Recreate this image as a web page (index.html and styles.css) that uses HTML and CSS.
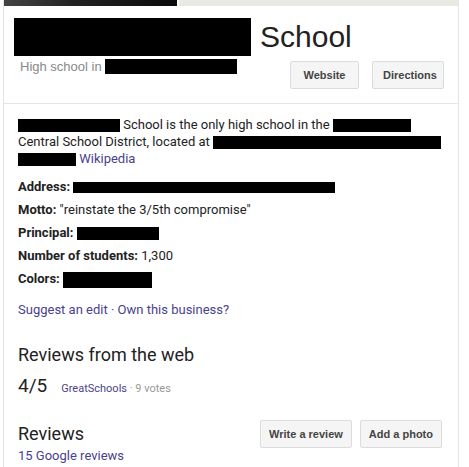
FILE: index.html
```html
<!DOCTYPE html>
<html lang="en">
<head>
  <meta charset="UTF-8" />
  <title>School</title>
  <link rel="stylesheet" href="styles.css">
</head>
<body>
  <div class="card">
    <div class="photos">
      <div class="photo"></div>
      <div class="map"></div>
    </div>

    <div class="header">
      <div class="title">
        <span class="redact title-redact"></span>
        <span class="title-text">School</span>
      </div>
      <div class="sub-row">
        <div class="subtitle">High school in <span class="redact sub-redact"></span></div>
        <div class="buttons">
          <a class="btn btn-website">Website</a>
          <a class="btn btn-directions">Directions</a>
        </div>
      </div>
    </div>

    <div class="body">
      <p class="desc">
        <span class="redact r-name"></span> School is the only high school in the <span class="redact r-district"></span>
        Central School District, located at <span class="redact r-addr"></span>
        <span class="redact r-city"></span> <a class="link">Wikipedia</a>
      </p>

      <div class="fact"><b>Address:</b> <span class="redact r-address"></span></div>
      <div class="fact"><b>Motto:</b> "reinstate the 3/5th compromise"</div>
      <div class="fact"><b>Principal:</b> <span class="redact r-principal"></span></div>
      <div class="fact"><b>Number of students:</b> 1,300</div>
      <div class="fact"><b>Colors:</b> <span class="redact r-colors"></span></div>

      <div class="edit"><a class="link">Suggest an edit</a> · <a class="link">Own this business?</a></div>

      <h2 class="section-title">Reviews from the web</h2>
      <div class="web-review">
        <span class="score">4/5</span>
        <a class="link small">GreatSchools</a><span class="votes"> · 9 votes</span>
      </div>

      <div class="reviews-row">
        <div>
          <h2 class="section-title reviews-title">Reviews</h2>
          <a class="link count">15 Google reviews</a>
        </div>
        <div class="buttons">
          <a class="btn btn-review">Write a review</a>
          <a class="btn btn-photo">Add a photo</a>
        </div>
      </div>
    </div>
  </div>
</body>
</html>
```

FILE: styles.css
```css
:root {
  --border: #e5e5e5;
  --text: #222;
  --link: #4b3f8c;
  --muted: #777;
}

body {
  margin: 0;
  background: #fff;
  color: var(--text);
  font-family: Roboto, "Liberation Sans", sans-serif;
  font-size: 13px;
}

.card {
  margin-left: 3px;
  width: 454px;
  border-left: 1px solid var(--border);
  border-right: 1px solid var(--border);
  min-height: 467px;
}

.photos {
  display: flex;
  height: 6px;
  gap: 2px;
}

.photo {
  width: 173px;
  background: linear-gradient(90deg, #444 0%, #222 40%, #0a0a0a 100%);
}

.map {
  flex: 1;
  background: #ebe9e4;
}

.redact {
  display: inline-block;
  background: #000;
  vertical-align: middle;
}

.header {
  padding: 12px 14px 14px 10px;
  border-bottom: 1px solid var(--border);
}

.title {
  display: flex;
  align-items: center;
  gap: 9px;
}

.title-redact {
  width: 237px;
  height: 38px;
}

.title-text {
  font-family: "Liberation Sans", Arial, sans-serif;
  font-size: 30px;
  color: #222;
}

.sub-row {
  display: flex;
  justify-content: space-between;
  align-items: flex-start;
}

.subtitle {
  margin-top: 3px;
  padding-left: 6px;
  font-family: "Liberation Sans", Arial, sans-serif;
  font-size: 13px;
  color: #888;
}

.sub-redact {
  width: 132px;
  height: 15px;
  vertical-align: -3px;
}

.buttons {
  display: flex;
  gap: 13px;
  margin-top: 5px;
}

.btn {
  display: inline-block;
  height: 26px;
  line-height: 26px;
  padding: 0 10px;
  background: #f5f5f5;
  border: 1px solid #dcdcdc;
  border-radius: 2px;
  font-family: "Liberation Sans", Arial, sans-serif;
  font-size: 11px;
  font-weight: bold;
  color: #444;
}

.btn-website { width: 47px; text-align: center; }
.btn-directions { width: 50px; text-align: center; }

.body {
  padding: 12px 16px 0 14px;
}

.desc {
  margin: 0 0 8px;
  line-height: 17px;
}

.r-name { width: 102px; height: 13px; }
.r-district { width: 78px; height: 13px; }
.r-addr { width: 228px; height: 13px; }
.r-city { width: 58px; height: 13px; }
.r-address { width: 262px; height: 11px; }
.r-principal { width: 82px; height: 13px; }
.r-colors { width: 89px; height: 16px; }

.link {
  color: var(--link);
  text-decoration: none;
}

.fact {
  line-height: 23px;
}

.fact b {
  font-weight: bold;
}

.edit {
  margin-top: 11px;
  line-height: 17px;
  color: var(--link);
}

.section-title {
  margin: 25px 0 0;
  font-size: 18px;
  font-weight: normal;
  line-height: 24px;
}

.web-review {
  display: flex;
  align-items: baseline;
  margin-top: 7px;
}

.score {
  font-size: 19px;
  margin-right: 14px;
}

.small {
  font-size: 11px;
}

.votes {
  font-size: 11px;
  color: #999;
  white-space: pre;
}

.reviews-row {
  display: flex;
  justify-content: space-between;
  align-items: flex-start;
  margin-top: 15px;
}

.reviews-title {
  margin-top: 10px;
}

.count {
  display: block;
  margin-top: 1px;
  line-height: 17px;
}

.reviews-row .buttons {
  margin-top: 8px;
  gap: 8px;
}

.reviews-row .btn {
  padding: 0 8px;
}
```
